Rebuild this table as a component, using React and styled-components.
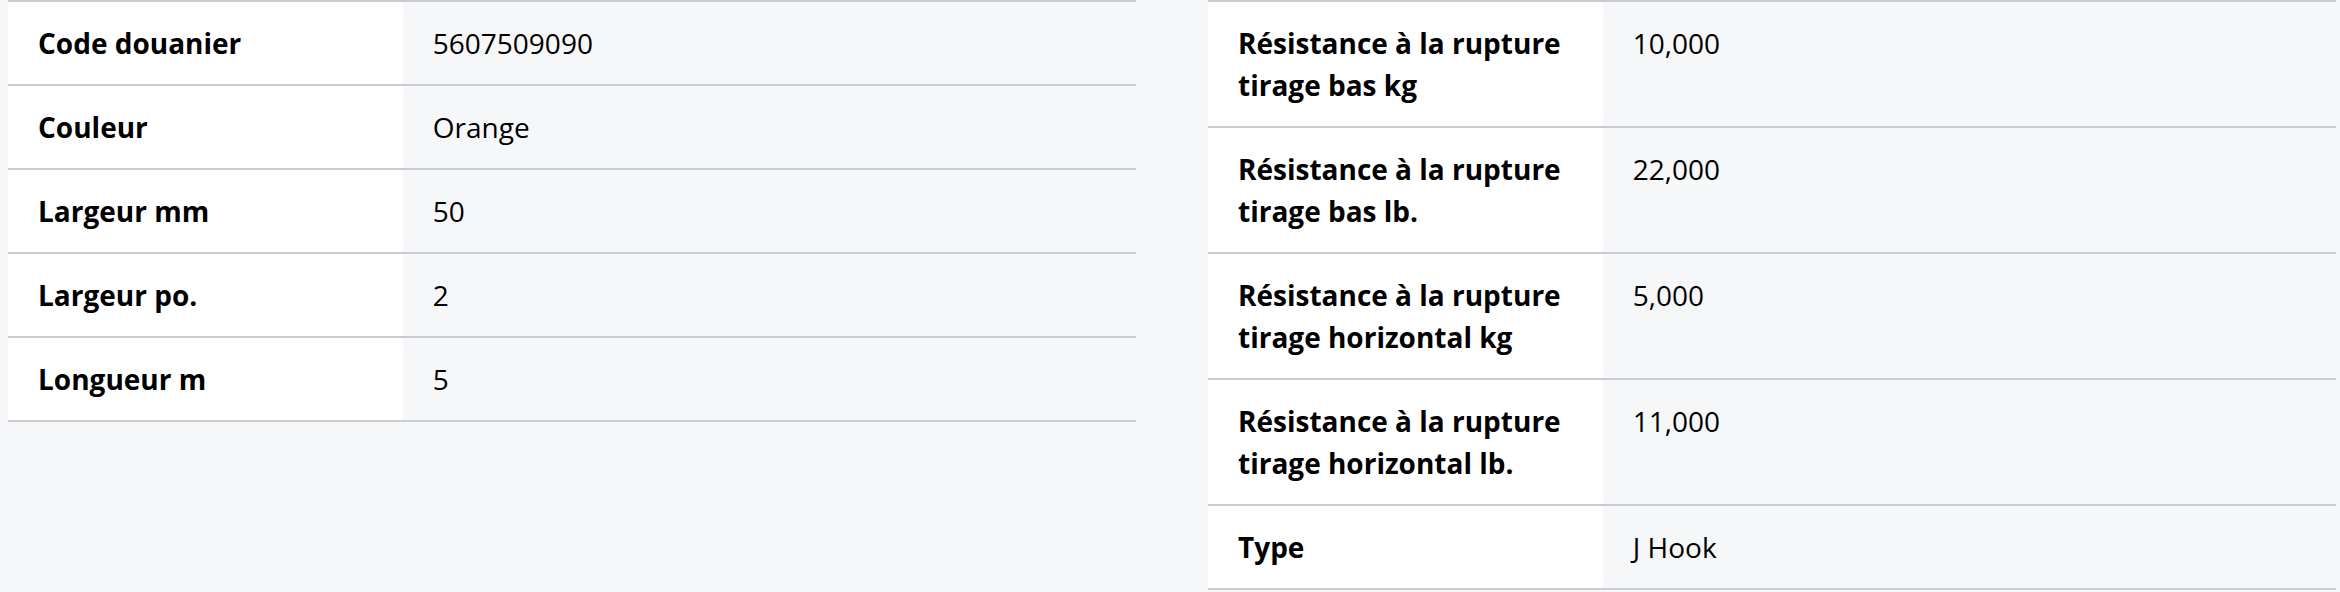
import React from "react";
import styled, { createGlobalStyle } from "styled-components";

const GlobalStyle = createGlobalStyle`
  body {
    margin: 0;
    background-color: #f6f7f9;
    font-family: "Open Sans", "Noto Sans", sans-serif;
    color: #000;
  }
`;

const Columns = styled.div`
  display: grid;
  grid-template-columns: 1fr 1fr;
  column-gap: 72px;
  align-items: start;
  padding: 0 4px 0 8px;
`;

const Table = styled.table`
  width: 100%;
  border-collapse: collapse;
  border-top: 2px solid #cbcccf;
  border-bottom: 2px solid #cbcccf;
`;

const Row = styled.tr`
  border-top: 2px solid #cbcccf;
`;

const Label = styled.th`
  width: 35%;
  background-color: #fff;
  padding: 20px 30px;
  text-align: left;
  vertical-align: top;
  font-size: 28px;
  line-height: 42px;
  font-weight: 700;
`;

const Value = styled.td`
  padding: 20px 30px;
  vertical-align: top;
  font-size: 28px;
  line-height: 42px;
  font-weight: 400;
`;

const left = [
  ["Code douanier", "5607509090"],
  ["Couleur", "Orange"],
  ["Largeur mm", "50"],
  ["Largeur po.", "2"],
  ["Longueur m", "5"],
];

const right = [
  ["Résistance à la rupture tirage bas kg", "10,000"],
  ["Résistance à la rupture tirage bas lb.", "22,000"],
  ["Résistance à la rupture tirage horizontal kg", "5,000"],
  ["Résistance à la rupture tirage horizontal lb.", "11,000"],
  ["Type", "J Hook"],
];

const SpecTable = ({ rows }) => (
  <Table>
    <tbody>
      {rows.map(([label, value]) => (
        <Row key={label}>
          <Label>{label}</Label>
          <Value>{value}</Value>
        </Row>
      ))}
    </tbody>
  </Table>
);

const App = () => {
  return (
    <>
      <GlobalStyle />
      <Columns>
        <SpecTable rows={left} />
        <SpecTable rows={right} />
      </Columns>
    </>
  );
};

export default App;
